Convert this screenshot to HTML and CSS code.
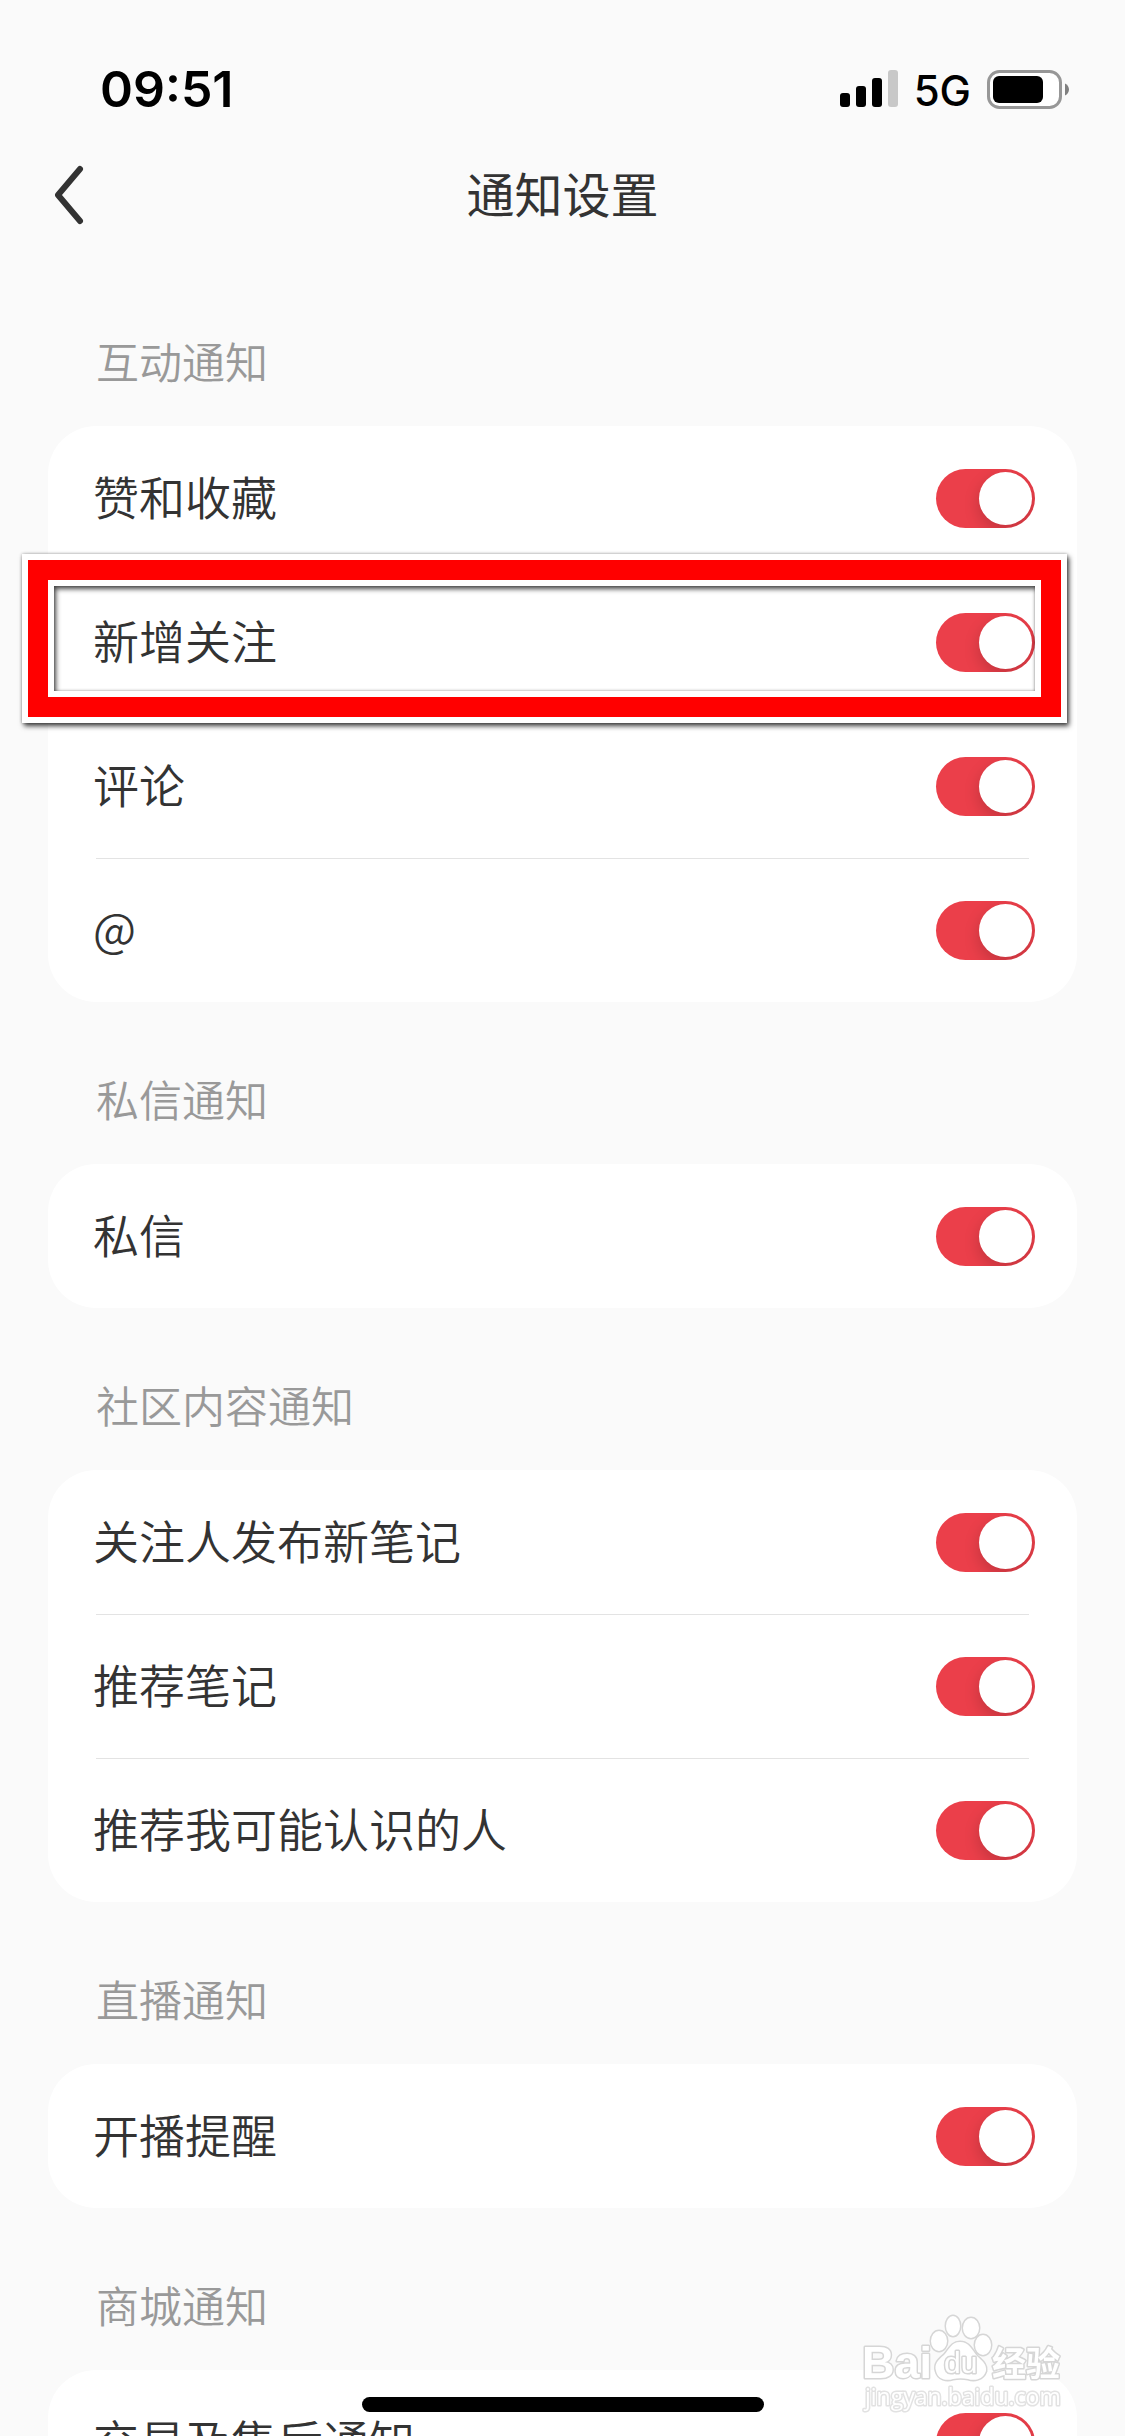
FILE: index.html
```html
<!DOCTYPE html>
<html lang="zh-CN">
<head>
<meta charset="utf-8">
<meta name="viewport" content="width=device-width, initial-scale=1">
<title>通知设置</title>
<link rel="stylesheet" href="styles.css">
</head>
<body>
<div class="app">
  <div class="status">
    <span class="time">09:51</span>
    <div class="indicators">
      <svg class="signal" width="58" height="38" viewBox="0 0 58 38" aria-hidden="true">
        <rect x="0" y="23" width="10" height="14" rx="3"/>
        <rect x="16" y="16" width="10" height="21" rx="3"/>
        <rect x="32" y="8" width="10" height="29" rx="3"/>
        <rect x="48" y="0" width="10" height="37" rx="3" fill="#c8c8c8"/>
      </svg>
      <span class="network">5G</span>
      <svg class="battery" width="82" height="39" viewBox="0 0 82 39" aria-hidden="true">
        <rect x="1.5" y="1.500" width="72" height="36" rx="11" fill="#fff" stroke="#979797" stroke-width="3"/>
        <rect x="6" y="6" width="50" height="27" rx="6"/>
        <path d="M78 13.500C80.500 14.500 82 17 82 19.500S80.500 24.500 78 25.500Z" fill="#808080"/>
      </svg>
    </div>
  </div>

  <header class="nav">
    <button class="back" type="button" aria-label="返回">
      <svg width="30" height="60" viewBox="0 0 30 60" aria-hidden="true">
        <path d="M26 4L4 30L26 56" fill="none" stroke="#333" stroke-width="6" stroke-linecap="round" stroke-linejoin="round"/>
      </svg>
    </button>
    <h1 class="title">通知设置</h1>
  </header>

  <main class="content">
    <section>
      <h2 class="heading">互动通知</h2>
      <div class="card">
        <label class="row"><span class="name">赞和收藏</span><input class="switch" type="checkbox" role="switch" checked></label>
        <label class="row"><span class="name">新增关注</span><input class="switch" type="checkbox" role="switch" checked><span class="marker"></span></label>
        <label class="row"><span class="name">评论</span><input class="switch" type="checkbox" role="switch" checked></label>
        <label class="row"><span class="name">@</span><input class="switch" type="checkbox" role="switch" checked></label>
      </div>
    </section>
    <section>
      <h2 class="heading">私信通知</h2>
      <div class="card">
        <label class="row"><span class="name">私信</span><input class="switch" type="checkbox" role="switch" checked></label>
      </div>
    </section>
    <section>
      <h2 class="heading">社区内容通知</h2>
      <div class="card">
        <label class="row"><span class="name">关注人发布新笔记</span><input class="switch" type="checkbox" role="switch" checked></label>
        <label class="row"><span class="name">推荐笔记</span><input class="switch" type="checkbox" role="switch" checked></label>
        <label class="row"><span class="name">推荐我可能认识的人</span><input class="switch" type="checkbox" role="switch" checked></label>
      </div>
    </section>
    <section>
      <h2 class="heading">直播通知</h2>
      <div class="card">
        <label class="row"><span class="name">开播提醒</span><input class="switch" type="checkbox" role="switch" checked></label>
      </div>
    </section>
    <section>
      <h2 class="heading">商城通知</h2>
      <div class="card">
        <label class="row"><span class="name">交易及售后通知</span><input class="switch" type="checkbox" role="switch" checked></label>
      </div>
    </section>
  </main>

  <svg class="watermark" width="208" height="100" viewBox="0 0 208 100">
    <g class="wm-shape">
      <ellipse cx="79" cy="27" rx="8" ry="10"/>
      <ellipse cx="93" cy="12" rx="7" ry="10"/>
      <ellipse cx="111" cy="14" rx="8" ry="10"/>
      <ellipse cx="123" cy="31" rx="8" ry="10"/>
      <path d="M100 28C91 28 89 36 84 41C78 46 74 50 76 57C78 66 87 67 93 65C98 64 103 64 108 65C114 67 123 66 126 57C127 50 122 47 117 42C112 36 109 28 100 28Z"/>
    </g>
    <text class="wm-name" x="2" y="64">Bai</text>
    <text class="wm-du" x="84" y="59">du</text>
    <text class="wm-cn" x="132" y="62">经验</text>
    <text class="wm-url" x="5" y="91">jingyan.baidu.com</text>
  </svg>
  <div class="home-bar"></div>
</div>
</body>
</html>
```
FILE: styles.css
```css
* {
  box-sizing: border-box;
}

body {
  margin: 0;
  background: #fafafa;
  color: #333;
  font-family: "Noto Sans CJK SC", sans-serif;
}

.app {
  display: flex;
  flex-direction: column;
  height: 100vh;
  overflow: hidden;
}

.status {
  display: flex;
  flex: none;
  align-items: center;
  justify-content: space-between;
  height: 126px;
  padding: 52px 56px 0 100px;
  color: #000;
  font-family: Inter, sans-serif;
}

.time {
  font-size: 50px;
  font-weight: 600;
}

.indicators {
  display: flex;
  align-items: center;
}

.network {
  margin: 0 16px;
  padding-top: 2px;
  font-size: 42px;
  font-weight: 500;
}

.nav {
  display: grid;
  flex: none;
  grid-template-columns: 1fr auto 1fr;
  align-items: center;
  height: 138px;
  padding: 0 54px;
}

.back {
  display: flex;
  justify-self: start;
  padding: 0;
  border: 0;
  background: none;
}

.title {
  margin: 0;
  padding-bottom: 6px;
  font-size: 48px;
  font-weight: 400;
  line-height: 72px;
}

.content {
  flex: 1;
  overflow-y: auto;
  padding: 0 48px;
  scrollbar-width: none;
}

.heading {
  margin: 0;
  padding: 65px 48px 35px;
  color: #999;
  font-size: 43px;
  font-weight: 350;
  line-height: 62px;
}

.card {
  border-radius: 48px;
  background: #fff;
}

.row {
  position: relative;
  display: flex;
  align-items: center;
  justify-content: space-between;
  height: 144px;
  padding: 0 42px 0 45px;
  font-size: 46px;
  font-weight: 350;
}

.row + .row::before {
  content: "";
  position: absolute;
  top: 0;
  right: 48px;
  left: 48px;
  height: 1px;
  background: #e3e3e3;
}

.name {
  padding-bottom: 6px;
}

.switch {
  width: 99px;
  height: 59px;
  margin: 0;
  padding: 3px;
  border-radius: 30px;
  appearance: none;
  background: #ccc;
  overflow: hidden;
}

.switch::before {
  content: "";
  display: block;
  width: 53px;
  height: 53px;
  border-radius: 50%;
  background: #fff;
  box-shadow: 0 6px 16px rgba(0, 0, 0, 0.18);
}

.switch:checked {
  background: #eb3f4a;
}

.switch:checked::before {
  margin-left: auto;
}

/* Highlight frame over one row: white, red, white bands */
.marker {
  position: absolute;
  z-index: 1;
  top: -16px;
  right: 10px;
  bottom: -9px;
  left: -26px;
  border: 6px solid #fff;
  box-shadow: 2px 3px 5px rgba(0, 0, 0, 0.75), 0 0 3px rgba(0, 0, 0, 0.3);
  pointer-events: none;
}

.marker::before {
  content: "";
  position: absolute;
  inset: 0;
  border: 20px solid #f00;
}

.marker::after {
  content: "";
  position: absolute;
  inset: 20px;
  border: 6px solid #fff;
  box-shadow: inset 2px 3px 5px rgba(0, 0, 0, 0.7), inset 0 0 3px rgba(0, 0, 0, 0.3);
}

.watermark {
  position: fixed;
  right: 57px;
  bottom: 22px;
}

.wm-shape,
.watermark text {
  fill: #fff;
  stroke: #d6d6d6;
  stroke-width: 3px;
  stroke-linejoin: round;
  paint-order: stroke;
}

.watermark .wm-name {
  font: 700 45px "Liberation Sans", sans-serif;
}

.watermark .wm-du {
  font: 400 30px "Liberation Sans", sans-serif;
}

.watermark .wm-cn {
  font: 700 34px "Noto Sans CJK SC", sans-serif;
}

.watermark .wm-url {
  stroke: #e2e2e2;
  font: 400 23px "Open Sans", sans-serif;
}

.home-bar {
  position: fixed;
  bottom: 24px;
  left: 50%;
  width: 402px;
  height: 15px;
  margin-left: -201px;
  border-radius: 8px;
  background: #000;
}
```
